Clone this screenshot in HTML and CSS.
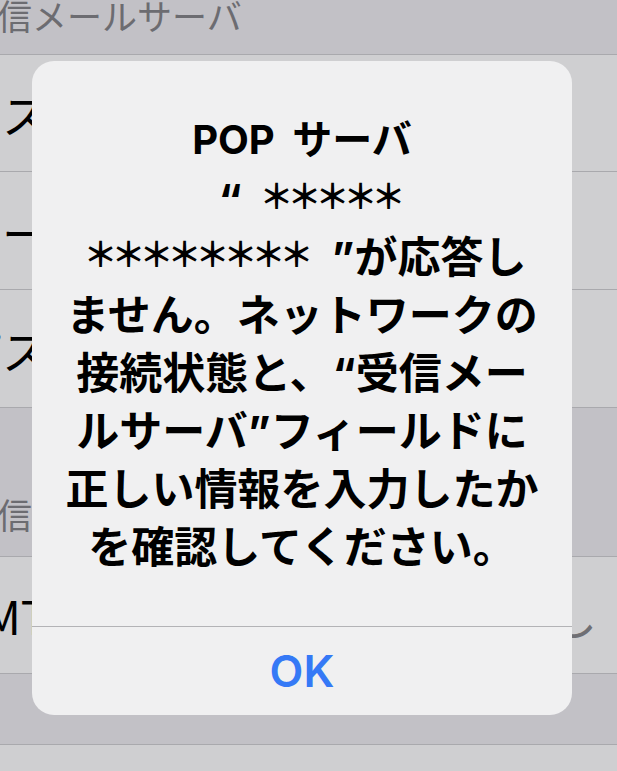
FILE: index.html
```html
<!DOCTYPE html>
<html lang="ja">
<head>
<meta charset="utf-8">
<title>POP サーバ</title>
<link rel="stylesheet" href="styles.css">
</head>
<body>
<div class="screen">
  <div class="sec-header first">受信メールサーバ</div>
  <div class="group">
    <div class="row"><span class="label">ホスト名</span></div>
    <div class="row"><span class="label">ユーザ名</span></div>
    <div class="row"><span class="label">パスワード</span></div>
  </div>
  <div class="sec-header second">送信メールサーバ</div>
  <div class="group">
    <div class="row"><span class="label">SMTP</span><span class="value">なし</span></div>
  </div>
  <div class="spacer"></div>
  <div class="group">
    <div class="row"></div>
  </div>
</div>

<div class="alert" role="alertdialog">
  <div class="alert-body">
    <div class="alert-title">POP サーバ</div>
    <div class="alert-msg">
      <div class="line"><span class="lead2"></span><span class="q">“</span><span class="gap1"></span><span class="ast">＊</span><span class="ast">＊</span><span class="ast">＊</span><span class="ast">＊</span><span class="ast">＊</span></div>
      <div class="line"><span class="lead3"></span><span class="ast">＊</span><span class="ast">＊</span><span class="ast">＊</span><span class="ast">＊</span><span class="ast">＊</span><span class="ast">＊</span><span class="ast">＊</span><span class="ast">＊</span><span class="gap2"></span><span class="q">”</span>が応答し</div>
      <div class="line">ません。ネットワークの</div>
      <div class="line">接続状態と、<span class="q">“</span>受信メー</div>
      <div class="line">ルサーバ<span class="q">”</span>フィールドに</div>
      <div class="line">正しい情報を入力したか</div>
      <div class="line">を確認してください。</div>
    </div>
  </div>
  <div class="alert-actions">
    <span class="ok">OK</span>
  </div>
</div>
</body>
</html>
```

FILE: styles.css
```css
html, body {
  margin: 0;
  padding: 0;
}

body {
  width: 617px;
  height: 771px;
  overflow: hidden;
  position: relative;
  background: #c2c1c6;
  font-family: "Inter", "Noto Sans CJK JP", sans-serif;
  color: #000;
}

.screen {
  margin-left: -44px;
  width: 661px;
}

.sec-header {
  font-family: "Noto Sans CJK JP", sans-serif;
  font-size: 35px;
  line-height: 44px;
  color: #6c6c71;
  padding-left: 6px;
  white-space: nowrap;
}

.sec-header.first {
  margin-top: -7px;
  padding-bottom: 17px;
}

.sec-header.second {
  padding-top: 84px;
  padding-bottom: 20px;
}

.group {
  background: #cfcfd1;
  border-top: 1px solid #a9a9ad;
}

.row {
  box-sizing: border-box;
  height: 118px;
  border-bottom: 1px solid #a9a9ad;
  display: flex;
  align-items: center;
  font-family: "Noto Sans CJK JP", sans-serif;
  font-size: 46px;
  white-space: nowrap;
}

.row:first-child {
  height: 117px;
}

.value {
  margin-left: auto;
  padding-right: 20px;
  color: #6f6f74;
}

.spacer {
  height: 70px;
}

.alert {
  position: absolute;
  left: 32px;
  top: 61px;
  width: 540px;
  height: 654px;
  background: #f0f0f1;
  border-radius: 22px;
  display: flex;
  flex-direction: column;
  overflow: hidden;
}

.alert-body {
  flex: 1;
  padding-top: 54px;
  text-align: center;
}

.alert-title {
  font-size: 40px;
  line-height: 50px;
  height: 50px;
  font-weight: 700;
  white-space: nowrap;
  word-spacing: 8px;
}

.alert-msg {
  margin-top: 2px;
  font-family: "Noto Sans CJK JP", sans-serif;
  font-size: 43px;
  font-weight: 700;
}

.line {
  height: 58px;
  line-height: 58px;
  white-space: nowrap;
  overflow: visible;
}

.q {
  font-family: "Inter", sans-serif;
  font-weight: 700;
  line-height: 1;
}

.ast {
  display: inline-block;
  width: 28px;
  text-align: center;
  font-size: 34px;
  font-weight: 700;
  line-height: 1;
  vertical-align: 6px;
}

.lead2 {
  display: inline-block;
  width: 14px;
}

.lead3 {
  display: inline-block;
  width: 6px;
}

.gap1 {
  display: inline-block;
  width: 18px;
}

.gap2 {
  display: inline-block;
  width: 24px;
}

.alert-actions {
  height: 88px;
  border-top: 1px solid #b3b3b6;
  display: flex;
  align-items: center;
  justify-content: center;
}

.ok {
  color: #3579f6;
  font-size: 44px;
  font-weight: 600;
}
```
